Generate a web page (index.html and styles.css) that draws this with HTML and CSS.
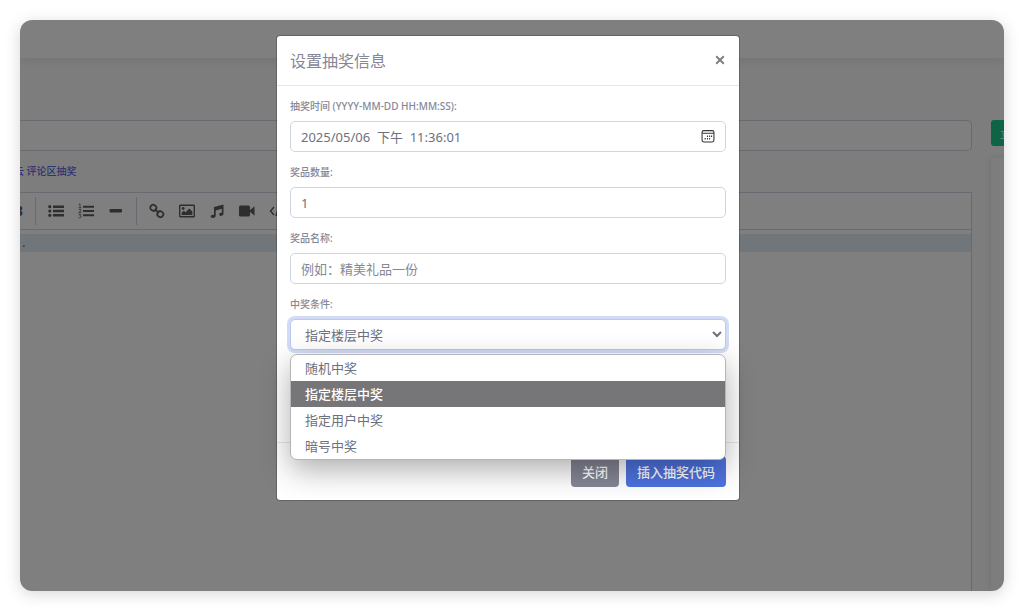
FILE: index.html
```html
<!DOCTYPE html>
<html lang="zh-CN">
<head>
  <meta charset="UTF-8">
  <meta name="viewport" content="width=device-width, initial-scale=1.0">
  <title>设置抽奖信息</title>
  <link rel="stylesheet" href="styles.css">
</head>
<body>
  <div class="screen">
    <header class="topbar"></header>
    <main class="content">
      <section class="main-col">
        <input class="title-input" type="text" aria-label="标题">
        <p class="insert-links"><a href="#">云</a> <a href="#">评论区抽奖</a></p>
        <div class="editor">
          <div class="toolbar">
            <button type="button" class="tool tool-bold" aria-label="粗体"><b>B</b></button>
            <span class="divider"></span>
            <button type="button" class="tool" aria-label="无序列表">
              <svg viewBox="0 0 16 16"><path d="M5 2.5h11v2.4H5zM5 6.8h11v2.4H5zM5 11.1h11v2.4H5z"/><circle cx="1.8" cy="3.7" r="1.6"/><circle cx="1.8" cy="8" r="1.6"/><circle cx="1.8" cy="12.3" r="1.6"/></svg>
            </button>
            <button type="button" class="tool" aria-label="有序列表">
              <svg viewBox="0 0 16 16"><path d="M5 2.7h11v2H5zM5 7h11v2H5zM5 11.3h11v2H5z"/><path class="line-thin" d="M.8 1.5l1.2-.7v4M.5 4.8h3M.7 6.600h2.200v1.200L.7 9.600h2.600M.6 11.400h2.300l-1 1.400c1.800 0 1.600 2.500-1.400 2"/></svg>
            </button>
            <button type="button" class="tool" aria-label="分割线">
              <svg viewBox="0 0 16 16"><rect x="1.500" y="6" width="12.500" height="3.600" rx="1"/></svg>
            </button>
            <span class="divider"></span>
            <button type="button" class="tool" aria-label="链接">
              <svg viewBox="0 0 16 16"><g class="line-thick"><rect x="1.300" y="2" width="6" height="5.600" rx="2.600" transform="rotate(35 4.300 4.800)"/><rect x="8.300" y="8.400" width="6" height="5.600" rx="2.600" transform="rotate(35 11.300 11.200)"/><path d="M5.800 6.200l4 3.800"/></g></svg>
            </button>
            <button type="button" class="tool" aria-label="图片">
              <svg viewBox="0 0 16 16"><rect class="line" x=".7" y="2.200" width="14.600" height="11.600" rx=".6"/><circle cx="4.200" cy="5.500" r="1.400"/><path d="M2.600 12v-2.300l2.200-1.900 1.800 1.400 3.600-3.700 3.200 3V12z"/></svg>
            </button>
            <button type="button" class="tool" aria-label="音乐">
              <svg viewBox="0 0 16 16"><path d="M5 4l9.500-2.500v9.300c0 2.400-4.400 2.900-4.400.8 0-1.300 1.500-1.900 2.700-1.700V5.800L6.700 7.400v5.400c0 2.600-5 3-5 .8 0-1.500 1.900-2 3.300-1.700z"/></svg>
            </button>
            <button type="button" class="tool" aria-label="视频">
              <svg viewBox="0 0 16 16"><rect x="0" y="2.500" width="11" height="11" rx="1.600"/><path d="M10 8l5.500-4.800v9.600z"/></svg>
            </button>
            <button type="button" class="tool" aria-label="代码">
              <svg viewBox="0 0 16 16"><path class="line" d="M5 4L1.500 8 5 12M12 4l3.500 4-3.500 4M10 3L7 13"/></svg>
            </button>
          </div>
          <div class="editor-body">
            <div class="active-line">.</div>
          </div>
        </div>
      </section>
      <aside class="side-col">
        <button type="button" class="btn-publish">立即发布</button>
        <div class="side-card"></div>
      </aside>
    </main>

    <div class="backdrop">
      <div class="modal" role="dialog" aria-labelledby="modalTitle">
        <div class="modal-header">
          <h1 id="modalTitle">设置抽奖信息</h1>
          <button type="button" class="close" aria-label="关闭窗口">
            <svg viewBox="0 0 10 10"><path d="M1.200 1.200l7.600 7.600M8.800 1.200L1.200 8.800"/></svg>
          </button>
        </div>
        <form class="modal-body">
          <div class="field">
            <label for="drawTime">抽奖时间 (YYYY-MM-DD HH:MM:SS):</label>
            <div class="date-box">
              <input class="control" type="text" id="drawTime" value="2025/05/06  下午  11:36:01">
              <button type="button" class="date-btn" aria-label="选择日期">
                <svg viewBox="0 0 13 13"><rect x="1" y="1.500" width="11" height="10.500" rx="1.500"/><path d="M1 4h11"/><path class="dots" d="M5.500 6.800h1M7.500 6.800h1M9.300 6.800h1M3.300 9h1M5.500 9h1M7.500 9h1"/></svg>
              </button>
            </div>
          </div>
          <div class="field">
            <label for="prizeCount">奖品数量:</label>
            <input class="control" type="text" id="prizeCount" value="1">
          </div>
          <div class="field">
            <label for="prizeName">奖品名称:</label>
            <input class="control" type="text" id="prizeName" placeholder="例如：精美礼品一份">
          </div>
          <div class="field">
            <label for="condition">中奖条件:</label>
            <div class="select-box">
              <select class="control control-focus" id="condition">
                <option>随机中奖</option>
                <option selected>指定楼层中奖</option>
                <option>指定用户中奖</option>
                <option>暗号中奖</option>
              </select>
              <ul class="menu">
                <li>随机中奖</li>
                <li class="selected">指定楼层中奖</li>
                <li>指定用户中奖</li>
                <li>暗号中奖</li>
              </ul>
            </div>
          </div>
          <div class="condition-extra"></div>
        </form>
        <div class="modal-footer">
          <button type="button" class="btn btn-secondary">关闭</button>
          <button type="button" class="btn btn-primary">插入抽奖代码</button>
        </div>
      </div>
    </div>
  </div>
</body>
</html>
```
FILE: styles.css
```css
* {
  box-sizing: border-box;
}

body {
  margin: 0;
  height: 100vh;
  padding: 20px;
  background: #fff;
  color: #6e707e;
  font-family: "Noto Sans", "Noto Sans CJK SC", sans-serif;
  font-size: 13px;
}

button, input, select {
  font-family: inherit;
  font-size: inherit;
}

.screen {
  position: relative;
  display: flex;
  flex-direction: column;
  height: 100%;
  overflow: hidden;
  border-radius: 12px;
  background: #fbfbfd;
}

body::before {
  content: "";
  position: absolute;
  inset: 20px;
  border-radius: 12px;
  box-shadow: 0 3px 16px rgba(0, 0, 0, 0.16);
}

/* page behind the dialog */
.topbar {
  flex: none;
  height: 38px;
  background: #fff;
  box-shadow: 0 2px 10px rgba(58, 59, 69, 0.12);
}

.content {
  flex: 1;
  display: flex;
  gap: 19px;
  padding-top: 62px;
  min-height: 0;
}

.main-col {
  flex: 1;
  display: flex;
  flex-direction: column;
  min-width: 0;
}

.title-input {
  width: 100%;
  height: 31px;
  border: 1px solid #d1d3e2;
  border-left: 0;
  border-radius: 0 5px 5px 0;
  background: #fff;
}

.insert-links {
  margin: 12px 0 12px -6px;
  font-size: 10px;
  font-weight: 500;
  line-height: 17px;
}

.insert-links a {
  color: #6068e6;
  text-decoration: none;
}

.editor {
  flex: 1;
  border: 1px solid #d1d3e2;
  border-width: 1px 1px 0 0;
  background: #fff;
}

.toolbar {
  display: flex;
  align-items: center;
  gap: 14px;
  height: 37px;
  margin-left: -9px;
  border-bottom: 1px solid #d1d3e2;
  overflow: hidden;
}

.tool {
  flex: none;
  width: 16px;
  height: 16px;
  padding: 0;
  border: 0;
  background: none;
  color: #5c5c5c;
}

.tool-bold {
  width: 12px;
  font-size: 14px;
  line-height: 16px;
  text-align: right;
}

.tool svg {
  display: block;
  width: 16px;
  height: 16px;
  fill: #5c5c5c;
}

.tool svg .line,
.tool svg .line-thin,
.tool svg .line-thick {
  fill: none;
  stroke: #5c5c5c;
  stroke-width: 1.4;
}

.tool svg .line-thin {
  stroke-width: 0.8;
}

.tool svg .line-thick {
  stroke-width: 1.8;
}

.divider {
  flex: none;
  width: 1px;
  height: 28px;
  margin: 0 -2px;
  background: #d1d3e2;
}

.editor-body {
  padding-top: 4px;
}

.active-line {
  height: 18px;
  padding-left: 2px;
  background: #e1ecf5;
  line-height: 17px;
}

.side-col {
  width: 13px;
  display: flex;
  flex-direction: column;
  gap: 12px;
}

.btn-publish {
  width: 80px;
  height: 26px;
  padding: 0 9px;
  border: 0;
  border-radius: 3px;
  background: #1cc88a;
  color: #fff;
  font-size: 10px;
  text-align: left;
}

.side-card {
  flex: 1;
  box-shadow: 0 0 6px rgba(58, 59, 69, 0.14);
}

/* dialog */
.backdrop {
  position: absolute;
  inset: 0;
  padding: 15px 8px 0 0;
  background: rgba(0, 0, 0, 0.5);
}

.modal {
  width: 464px;
  max-width: 100%;
  margin: 0 auto;
  border: 1px solid rgba(0, 0, 0, 0.2);
  border-radius: 4px;
  background: #fff;
  background-clip: padding-box;
}

.modal-header {
  display: flex;
  align-items: center;
  justify-content: space-between;
  height: 50px;
  padding: 0 14px 2px 13px;
  border-bottom: 1px solid #e3e6f0;
}

.modal-header h1 {
  margin: 0;
  color: #858796;
  font-size: 16px;
  font-weight: 400;
}

.close {
  padding: 0;
  border: 0;
  background: none;
}

.close svg {
  display: block;
  width: 10px;
  height: 10px;
  fill: none;
  stroke: #7f7f7f;
  stroke-width: 2;
}

.modal-body {
  padding: 13px;
}

.field {
  margin-bottom: 13px;
}

.field label {
  display: block;
  margin-bottom: 7px;
  color: #858796;
  font-size: 10px;
  font-weight: 500;
  line-height: 15px;
}

.control {
  display: block;
  width: 100%;
  height: 31px;
  padding: 0 10px;
  border: 1px solid #d1d3e2;
  border-radius: 5px;
  outline: 0;
  background: #fff;
  color: #6e707e;
}

.control::placeholder {
  color: #858796;
}

.control-focus {
  border-color: #bac8f3;
  box-shadow: 0 0 0 3px rgba(78, 115, 223, 0.25);
}

#drawTime {
  white-space: pre;
}

.date-box,
.select-box {
  position: relative;
}

.date-btn {
  position: absolute;
  top: 8px;
  right: 11px;
  padding: 0;
  border: 0;
  background: none;
}

.date-btn svg {
  display: block;
  width: 14px;
  height: 14px;
  fill: none;
  stroke: #333;
}

.date-btn .dots {
  stroke-width: 1.3;
}

.menu {
  position: absolute;
  top: 35px;
  left: 0;
  right: 0;
  margin: 0;
  padding: 0;
  border: 1px solid #b5b5b8;
  border-radius: 7px;
  background: #fff;
  box-shadow: 0 10px 30px rgba(0, 0, 0, 0.32);
  list-style: none;
}

.menu li {
  padding: 0 14px;
  line-height: 26px;
}

.menu .selected {
  background: #767678;
  color: #fff;
  font-weight: 500;
}

.condition-extra {
  height: 66px;
}

.modal-footer {
  display: flex;
  justify-content: flex-end;
  gap: 7px;
  padding: 13px;
  border-top: 1px solid #e3e6f0;
}

.btn {
  height: 31px;
  padding: 0 10px;
  border: 1px solid transparent;
  border-radius: 4px;
  color: #fff;
  font-weight: 500;
}

.btn-secondary {
  background: #858796;
}

.btn-primary {
  background: #4e73df;
}
```
